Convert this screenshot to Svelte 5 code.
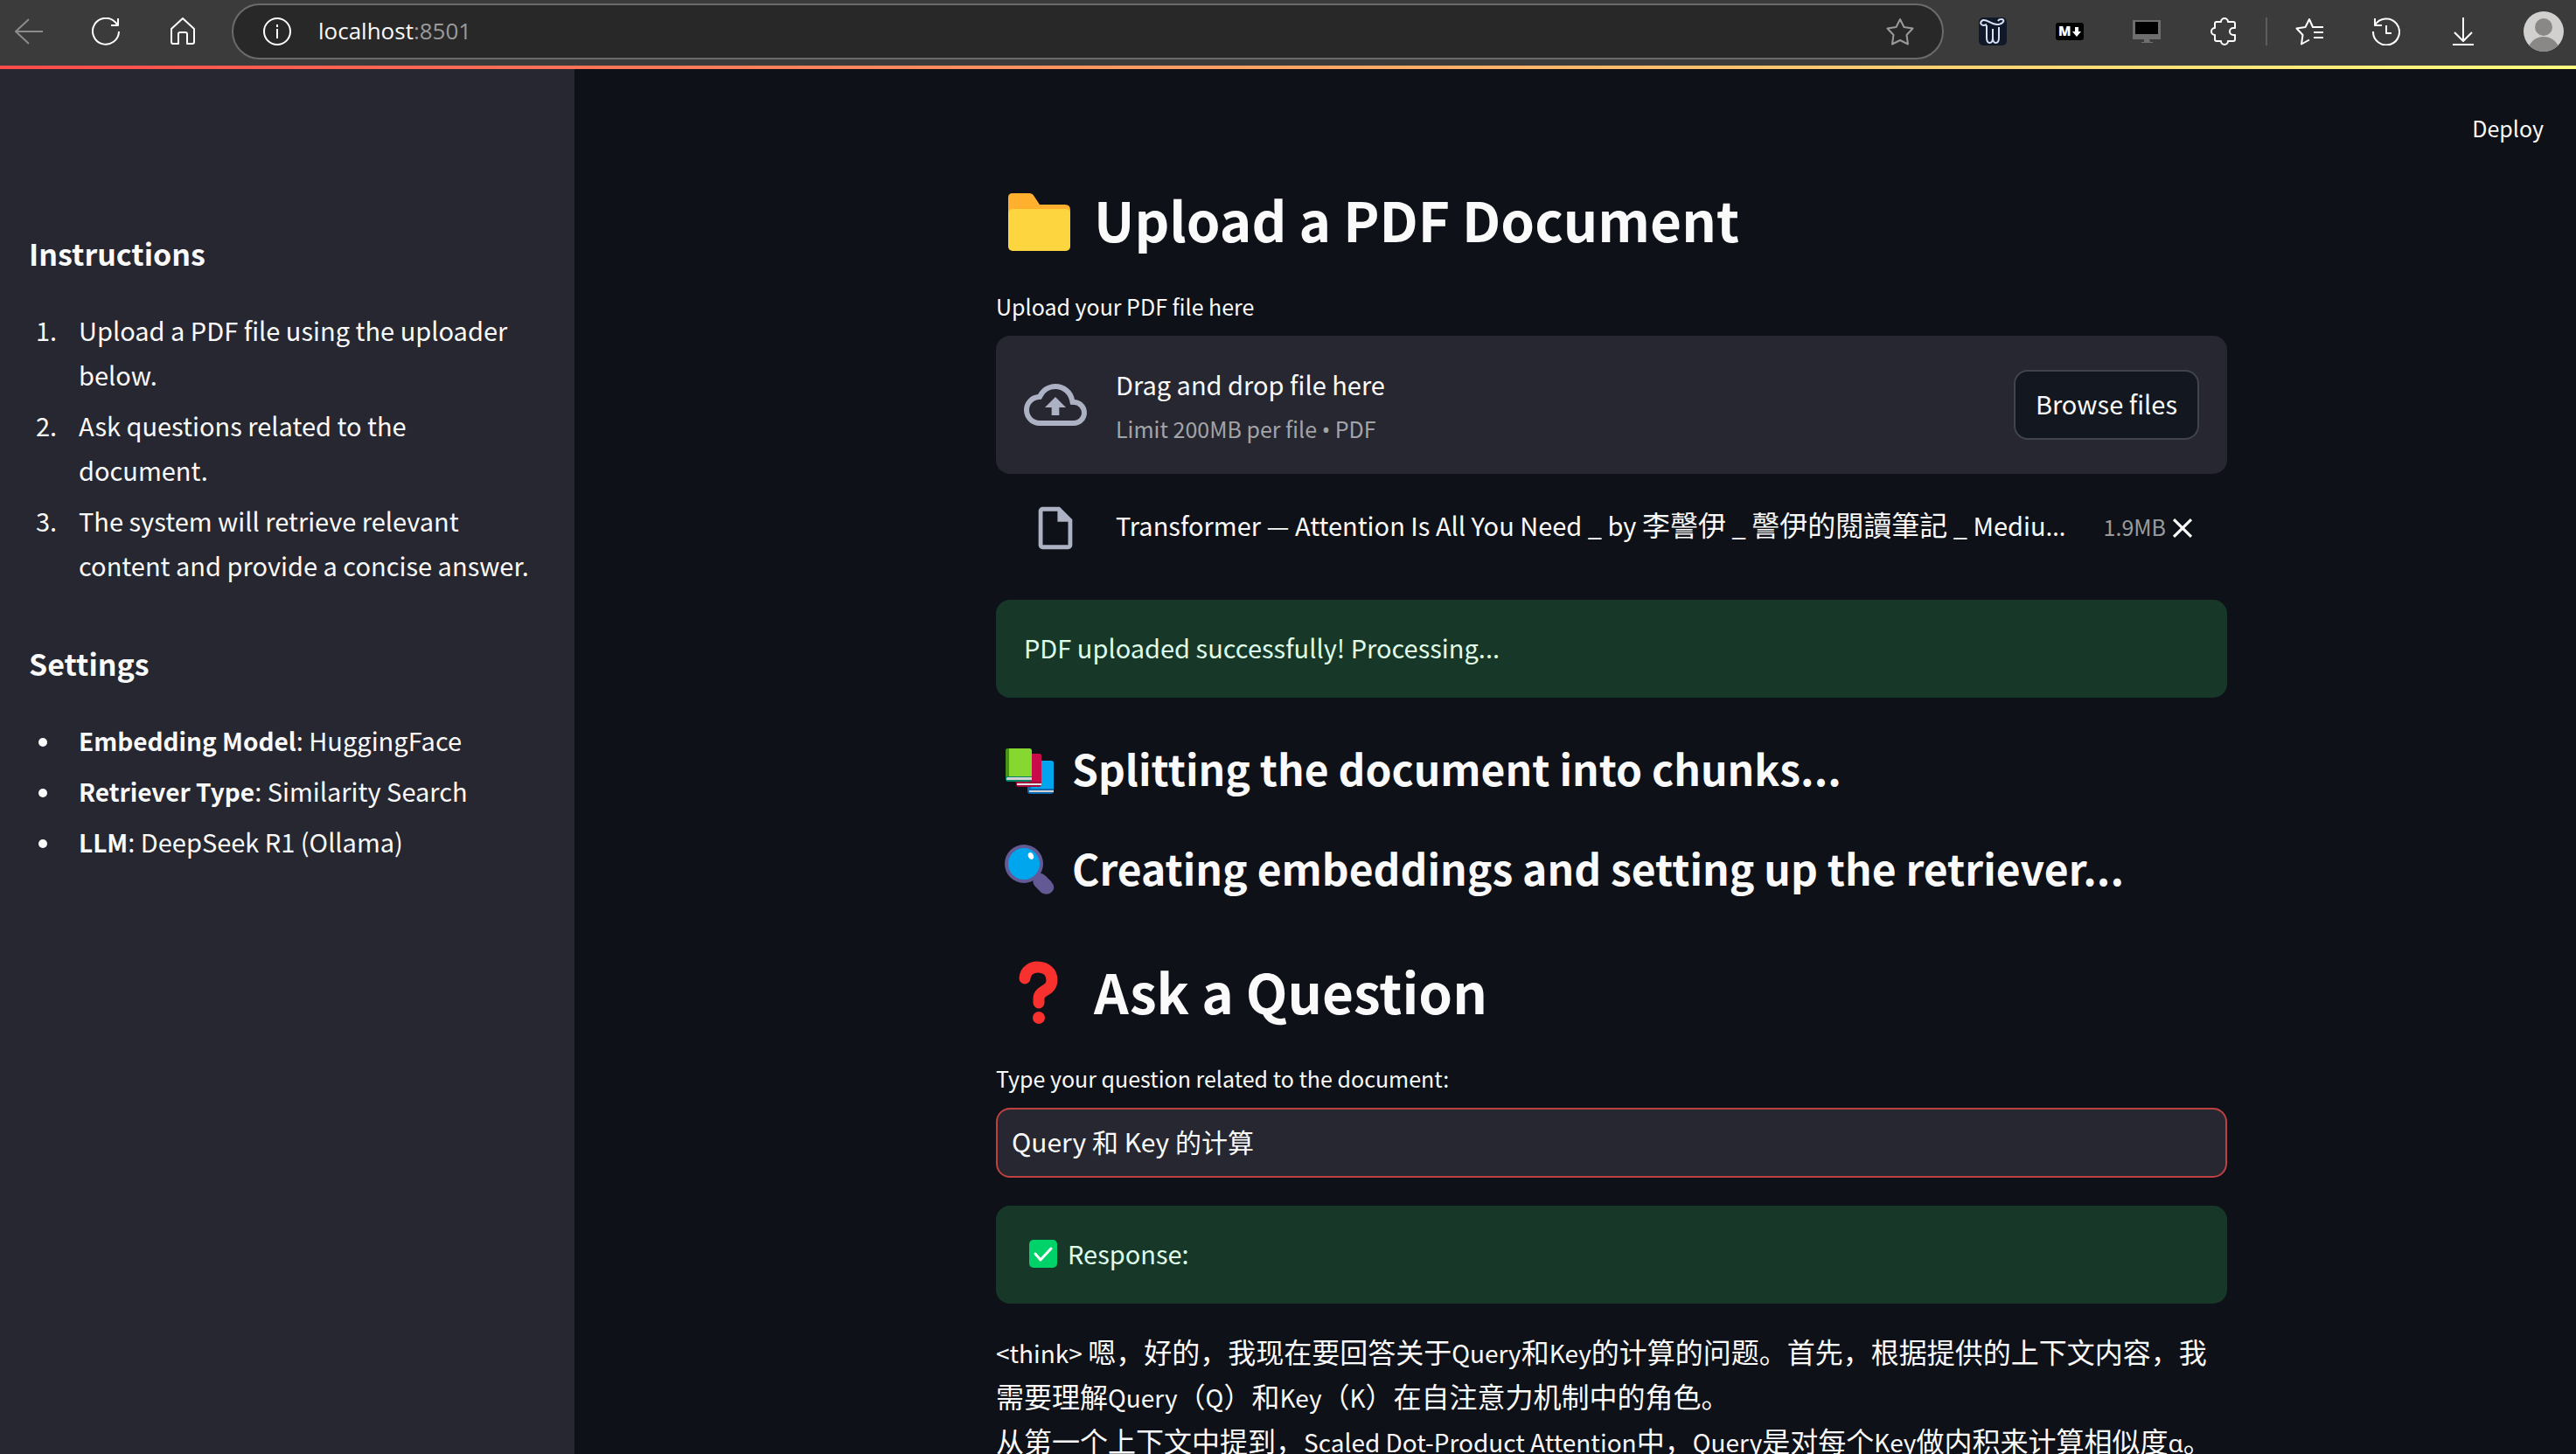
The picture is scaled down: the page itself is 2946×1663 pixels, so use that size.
<script lang="ts">
    let question = "Query 和 Key 的计算";

    const steps = [
        "Upload a PDF file using the uploader below.",
        "Ask questions related to the document.",
        "The system will retrieve relevant content and provide a concise answer.",
    ];

    const settings = [
        { name: "Embedding Model", value: "HuggingFace" },
        { name: "Retriever Type", value: "Similarity Search" },
        { name: "LLM", value: "DeepSeek R1 (Ollama)" },
    ];

    const fileName = "Transformer — Attention Is All You Need _ by 李謦伊 _ 謦伊的閱讀筆記 _ Mediu…";

    const answer = [
        "<think> 嗯，好的，我现在要回答关于Query和Key的计算的问题。首先，根据提供的上下文内容，我需要理解Query（Q）和Key（K）在自注意力机制中的角色。",
        "从第一个上下文中提到，Scaled Dot-Product Attention中，Query是对每个Key做内积来计算相似度α。",
    ];

    // latin runs are set smaller than the CJK text round them,
    // symbols that the CJK font draws full width get their own font
    const runs = (text: string) =>
        text
            .split(/([\u3000-\u303f\u3400-\u9fff\uff00-\uffef]+|[α…])/)
            .filter((part) => part !== "")
            .map((part) => ({
                part,
                kind: /[α…]/.test(part) ? "symbol" : /[\u3000-\uffef]/.test(part) ? "cjk" : "latin",
            }));
</script>

<div class="browser">
    <nav class="toolbar">
        <button class="tool dim" aria-label="Back">
            <svg viewBox="0 0 32 32"><path d="M32 16H1M16 2L1 16l15 14" /></svg>
        </button>
        <button class="tool" aria-label="Refresh">
            <svg viewBox="0 0 32 32"><path d="M31 16A15 15 0 1 1 27 5.500L30 9M30 1v8h-8" /></svg>
        </button>
        <button class="tool" aria-label="Home">
            <svg viewBox="0 0 32 32"><path d="M3 13L16 1l13 12v15q0 2-2 2h-6V19q0-2-2-2h-6q-2 0-2 2v11H5q-2 0-2-2z" /></svg>
        </button>
        <div class="address">
            <svg viewBox="0 0 32 32"><circle cx="16" cy="16" r="15" /><path d="M16 13v11M16 8v3" /></svg>
            <span class="url">localhost<span class="port">:8501</span></span>
            <button class="tool star" aria-label="Add to favorites">
                <svg viewBox="0 0 32 32"><path d="M16 2l4.500 9 10 1.500-7 7.500 1.500 10.500L16 26l-9 4.500L8.500 20l-7-7.500 10-1.500z" /></svg>
            </button>
        </div>
        <button class="tool" aria-label="Writing extension">
            <svg viewBox="0 0 32 32">
                <rect class="ink" width="32" height="32" rx="5" />
                <path class="pale" d="M9 8C2 11 0 5 5 3c5-1 10 6 17 5 7-1 8-6 4-6-2 0-3 0-4 2M9 9v14c0 8 7 8 7 0V13M16 23c0 8 7 8 7 0V11" />
            </svg>
        </button>
        <button class="tool" aria-label="Markdown extension">
            <svg viewBox="0 0 32 32">
                <rect class="black" y="6" width="32" height="20" rx="3" />
                <text x="3" y="21">M</text>
                <path class="arrow" d="M22 11h4v5h3l-5 6-5-6h3z" />
            </svg>
        </button>
        <button class="tool" aria-label="Screen extension">
            <svg viewBox="0 0 32 32">
                <rect class="gray" y="3" width="32" height="22" />
                <rect class="black" x="3" y="5" width="26" height="14" />
                <path class="gray" d="M13 25h6l1 3h3v1H10v-1h3z" />
            </svg>
        </button>
        <button class="tool" aria-label="Extensions">
            <svg viewBox="0 0 32 32"><path d="M13 5a4 4 0 0 1 8 0h6q2 0 2 2v5h-2a4 4 0 0 0 0 8h2v5q0 2-2 2h-6a4 4 0 0 1-8 0H8q-2 0-2-2v-5a4 4 0 0 1 0-8V7q0-2 2-2z" /></svg>
        </button>
        <span class="divider"></span>
        <button class="tool" aria-label="Favorites">
            <svg viewBox="0 0 32 32"><path d="M32 11H20l-4-9-4.500 9-10 1.500 7 7.500L7 30.500l9-5M21 17h11M21 23h11" /></svg>
        </button>
        <button class="tool" aria-label="History">
            <svg viewBox="0 0 32 32"><path d="M3 1v8h8M3 9A15 15 0 1 1 1 16M16 9v9h6" /></svg>
        </button>
        <button class="tool" aria-label="Downloads">
            <svg viewBox="0 0 32 32"><path d="M16 0v26M6 17l10 10 10-10M4 31h24" /></svg>
        </button>
        <button class="avatar" aria-label="Profile">
            <svg viewBox="0 0 46 46">
                <clipPath id="face"><circle cx="23" cy="23" r="23" /></clipPath>
                <g clip-path="url(#face)">
                    <rect class="light" width="46" height="46" />
                    <circle class="person" cx="23" cy="18" r="10" />
                    <ellipse class="person" cx="23" cy="46" rx="18" ry="17" />
                </g>
            </svg>
        </button>
    </nav>
    <div class="decoration"></div>

    <div class="app">
        <aside>
            <h3>Instructions</h3>
            <ol>
                {#each steps as step}
                    <li><span>{step}</span></li>
                {/each}
            </ol>
            <h3>Settings</h3>
            <ul>
                {#each settings as setting}
                    <li><span><strong>{setting.name}</strong>: {setting.value}</span></li>
                {/each}
            </ul>
        </aside>

        <main>
            <header><button class="deploy">Deploy</button></header>
            <div class="block">
                <h1>
                    <svg class="emoji" viewBox="0 0 98 86">
                        <path fill="#ffb02e" d="M14 19q0-5 5-5h19q4 0 6 4l6 9h29q6 0 6 6v20H14z" />
                        <rect fill="#fcd53f" x="14" y="32" width="71" height="48" rx="5" />
                    </svg>
                    Upload a PDF Document
                </h1>
                <label class="caption" for="upload">Upload your PDF file here</label>
                <section class="dropzone">
                    <svg class="cloud" viewBox="0 0 24 24"><path d="M19.350 10.040A7.490 7.490 0 0 0 12 4C9.110 4 6.600 5.640 5.350 8.040A5.994 5.994 0 0 0 0 14c0 3.310 2.690 6 6 6h13c2.760 0 5-2.240 5-5 0-2.640-2.050-4.780-4.650-4.960zM19 18H6c-2.210 0-4-1.790-4-4 0-2.050 1.530-3.760 3.560-3.970l1.070-.110.500-.950A5.469 5.469 0 0 1 12 6c2.620 0 4.880 1.860 5.390 4.430l.300 1.500 1.530.110A2.980 2.980 0 0 1 22 15c0 1.650-1.350 3-3 3zM8 13h2.550v3h2.900v-3H16l-4-4z" /></svg>
                    <div class="hint">
                        <span>Drag and drop file here</span>
                        <small>Limit 200MB per file <span class="bullet">•</span> PDF</small>
                    </div>
                    <button class="browse" id="upload">Browse files</button>
                </section>
                <div class="file">
                    <svg class="page" viewBox="0 0 24 24"><path d="M6 2c-1.100 0-1.990.900-1.990 2L4 20c0 1.100.890 2 1.990 2H18c1.100 0 2-.900 2-2V8l-6-6H6zm0 18V4h7v5h5v11H6z" /></svg>
                    <span class="name mixed">{#each runs(fileName) as run}<span class={run.kind}>{run.part}</span>{/each}</span>
                    <small>1.9MB</small>
                    <button class="remove" aria-label="Remove file">
                        <svg viewBox="0 0 24 24"><path d="M19 6.410L17.590 5 12 10.590 6.410 5 5 6.410 10.590 12 5 17.590 6.410 19 12 13.410 17.590 19 19 17.590 13.410 12z" /></svg>
                    </button>
                </div>
                <div class="alert" role="status">PDF uploaded successfully! Processing...</div>
                <h2>
                    <svg class="emoji" viewBox="0 0 76 68">
                        <rect fill="#0f69af" x="36" y="26" width="30" height="38" rx="3" />
                        <path fill="#00a6ed" d="M40 26h23q3 0 3 3v29H40z" />
                        <path fill="#d3d3d3" d="M38 60h28v2H38z" />
                        <rect fill="#a30b3a" x="23" y="18" width="29" height="38" rx="3" />
                        <path fill="#ca0b4a" d="M27 18h22q3 0 3 3v29H27z" />
                        <path fill="#e6e6e6" d="M24 52h28v2H24z" />
                        <rect fill="#008463" x="11" y="12" width="30" height="38" rx="3" />
                        <path fill="#44911b" d="M11 14q0-2 3-2h5v32h-8z" />
                        <path fill="#86d72f" d="M15 12h23q3 0 3 3v29H15z" />
                        <path fill="#d3d3d3" d="M13 45h28v3H12q0-3 1-3z" />
                    </svg>
                    Splitting the document into chunks...
                </h2>
                <h2>
                    <svg class="emoji" viewBox="0 0 76 68">
                        <path fill="#635994" d="M44 45l4-4q5-1 9 3l6 6q6 7 1 12t-12 1l-7-7q-4-4-2-8z" />
                        <circle fill="#635994" cx="32" cy="30" r="22" />
                        <circle fill="#00a6ed" cx="32" cy="30" r="18" />
                        <ellipse fill="#fff" cx="40" cy="21" rx="3" ry="4" transform="rotate(-25 40 21)" />
                    </svg>
                    Creating embeddings and setting up the retriever...
                </h2>
                <h1 class="ask">
                    <svg class="emoji" viewBox="0 0 98 86">
                        <path fill="none" stroke="#f8312f" stroke-width="13" stroke-linecap="round" d="M33 29C34 11 64 12 64 31c0 13-15 11-15 21v5" />
                        <circle fill="#f8312f" cx="49" cy="74" r="7" />
                    </svg>
                    Ask a Question
                </h1>
                <label class="caption" for="question">Type your question related to the document:</label>
                <input id="question" type="text" bind:value={question} />
                <div class="alert response" role="status">
                    <svg class="check" viewBox="0 0 32 32">
                        <rect fill="#00d26a" width="32" height="32" rx="5" />
                        <path fill="none" stroke="#fff" stroke-width="3" stroke-linecap="round" stroke-linejoin="round" d="M7 16l6 7L25 10" />
                    </svg>
                    Response:
                </div>
                <div class="answer mixed">
                    {#each answer as line}
                        <p>{#each runs(line) as run}<span class={run.kind}>{run.part}</span>{/each}</p>
                    {/each}
                </div>
            </div>
        </main>
    </div>
</div>

<style>
    :global(body) {
        background-color: #0e1117;
    }

    .browser {
        display: flex;
        flex-direction: column;
        height: 100vh;
        overflow: hidden;
        box-sizing: border-box;
        color: #fafafa;
        font-family: "Noto Sans CJK SC", "Noto Sans", sans-serif;
        font-size: 29px;
        line-height: 51px;
    }

    button {
        padding: 0;
        border: 0;
        background: none;
        color: inherit;
        font: inherit;
        cursor: pointer;
    }

    svg {
        display: block;
        flex: none;
    }

    .toolbar {
        display: flex;
        flex: none;
        align-items: center;
        gap: 56px;
        height: 75px;
        padding: 0 14px 4px 17px;
        box-sizing: border-box;
        background-color: #3b3b3b;
    }

    .tool svg,
    .address svg {
        width: 32px;
        height: 32px;
        fill: none;
        stroke: #fff;
        stroke-width: 2;
        stroke-linejoin: round;
    }

    .tool.dim svg {
        stroke: #8c8c8c;
    }

    .address {
        display: flex;
        flex: 1;
        align-items: center;
        gap: 31px;
        height: 64px;
        margin: 0 -16px;
        padding: 0 32px 0 34px;
        border: 2px solid #6b6b6b;
        border-radius: 32px;
        box-sizing: border-box;
        background-color: #282828;
    }

    .url {
        flex: 1;
        font-family: "Open Sans", "Noto Sans", sans-serif;
        font-size: 26px;
    }

    .port {
        color: #9a9a9a;
    }

    .address .star svg {
        stroke: #9a9a9a;
    }

    .toolbar .ink {
        fill: #111827;
        stroke: none;
    }

    .toolbar .pale {
        stroke: #d3e0f7;
    }

    .toolbar .black {
        fill: #000;
        stroke: none;
    }

    .toolbar .gray {
        fill: #6e6e6e;
        stroke: none;
    }

    .toolbar .arrow,
    .toolbar text {
        fill: #fff;
        stroke: none;
        font-family: "Open Sans", sans-serif;
        font-size: 15px;
        font-weight: 800;
    }

    .divider {
        width: 2px;
        height: 32px;
        margin: 0 -24px;
        background-color: #5c5c5c;
    }

    .avatar {
        margin-left: -3px;
    }

    .avatar svg {
        width: 46px;
        height: 46px;
    }

    .light {
        fill: #d2d0ce;
    }

    .person {
        fill: #8a8886;
    }

    .decoration {
        flex: none;
        height: 4px;
        background-image: linear-gradient(90deg, #ff4b4b, #fffd80);
    }

    .app {
        display: flex;
        flex: 1;
        min-height: 0;
    }

    aside {
        flex: none;
        width: 657px;
        padding: 186px 48px 0 33px;
        box-sizing: border-box;
        background-color: #262730;
    }

    h1,
    h2,
    h3 {
        margin: 0;
        font-weight: 600;
    }

    h3 {
        font-size: 34px;
        line-height: 50px;
    }

    aside ol,
    aside ul {
        margin: 37px 0 62px;
        padding: 0;
        list-style: none;
        counter-reset: step;
    }

    aside li {
        display: flex;
        margin-bottom: 7px;
        counter-increment: step;
    }

    aside ul li {
        margin-bottom: 6px;
    }

    aside ol li::before {
        content: counter(step) ".";
        flex: none;
        width: 49px;
        padding-left: 8px;
    }

    aside ul li::before {
        content: "";
        flex: none;
        width: 10px;
        height: 10px;
        margin: 23px 36px 0 11px;
        border-radius: 50%;
        background-color: #fafafa;
    }

    strong {
        font-size: 28px;
        font-weight: 600;
    }

    main {
        flex: 1;
        min-width: 0;
        padding-left: 83px;
    }

    header {
        display: flex;
        justify-content: flex-end;
        padding: 47px 37px 41px;
    }

    .deploy {
        font-size: 25px;
        line-height: 40px;
    }

    .block {
        max-width: 1408px;
        margin: 0 auto;
    }

    h1,
    h2 {
        display: flex;
    }

    h1 {
        gap: 14px;
        margin-bottom: 36px;
        font-size: 62px;
        line-height: 86px;
    }

    h1 .emoji {
        width: 98px;
        height: 86px;
    }

    h2 {
        gap: 11px;
        margin-top: 46px;
        font-size: 48px;
        line-height: 68px;
    }

    h2 .emoji {
        width: 76px;
        height: 68px;
    }

    .ask {
        margin-top: 64px;
    }

    .caption {
        display: block;
        margin-bottom: 13px;
        font-size: 25px;
        line-height: 42px;
    }

    .dropzone {
        display: flex;
        align-items: center;
        height: 158px;
        padding: 0 32px;
        border-radius: 16px;
        box-sizing: border-box;
        background-color: #262730;
    }

    .cloud {
        width: 72px;
        height: 72px;
        fill: #acb1c3;
    }

    .hint {
        display: flex;
        flex: 1;
        flex-direction: column;
        margin-left: 33px;
        padding-top: 4px;
    }

    small {
        color: rgba(250, 250, 250, 0.6);
        font-size: 25px;
    }

    .browse {
        height: 80px;
        padding: 0 23px 3px;
        border: 2px solid rgba(250, 250, 250, 0.2);
        border-radius: 16px;
        background-color: #131720;
    }

    .file {
        display: flex;
        align-items: flex-start;
        margin: 33px 0 53px;
        padding: 0 32px 0 39px;
    }

    .page {
        width: 58px;
        height: 58px;
        margin-right: 40px;
        fill: #acb1c3;
    }

    .mixed {
        font-size: 32px;
    }

    .latin,
    .symbol {
        font-size: 29px;
        line-height: 1;
    }

    .symbol,
    .bullet {
        font-family: "Noto Sans", sans-serif;
    }

    .name {
        flex: 1;
        min-width: 0;
        overflow: hidden;
        font-family: "Noto Sans CJK TC", sans-serif;
        line-height: 48px;
        white-space: nowrap;
    }

    .file small {
        line-height: 54px;
    }

    .remove {
        display: flex;
        align-items: center;
        align-self: stretch;
    }

    .remove svg {
        width: 38px;
        height: 38px;
        fill: #fafafa;
    }

    .alert {
        padding: 29px 32px 32px;
        border-radius: 16px;
        background-color: #173828;
        color: #dffde9;
    }

    .response {
        display: flex;
        align-items: center;
        gap: 12px;
        margin: 32px 0 29px;
    }

    .check {
        width: 32px;
        height: 32px;
        margin-left: 6px;
    }

    input {
        display: block;
        width: 100%;
        height: 80px;
        padding: 0 16px 4px;
        border: 2px solid #bd4043;
        border-radius: 16px;
        box-sizing: border-box;
        outline: none;
        background-color: #262730;
        color: #fafafa;
        font-family: inherit;
        font-size: 30px;
    }

    .answer p {
        margin: 0;
    }

    .answer .latin,
    .answer .symbol {
        font-size: 28px;
    }
</style>
